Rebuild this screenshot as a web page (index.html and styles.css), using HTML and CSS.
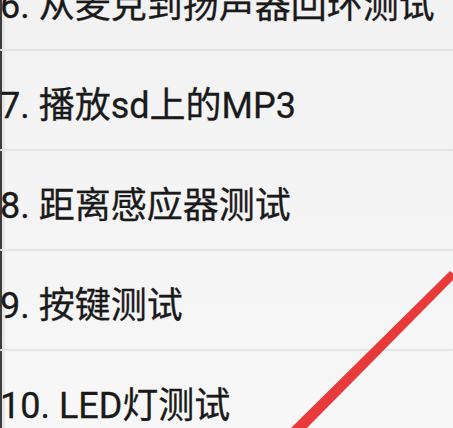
FILE: index.html
```html
<!DOCTYPE html>
<html lang="zh">
<head>
<meta charset="utf-8">
<link rel="stylesheet" href="styles.css">
</head>
<body>
<div class="screen">
  <ul class="list">
    <li class="item">6. 从麦克到扬声器回环测试</li>
    <li class="item">7. 播放sd上的MP3</li>
    <li class="item">8. 距离感应器测试</li>
    <li class="item">9. 按键测试</li>
    <li class="item">10. LED灯测试</li>
  </ul>
  <svg class="mark" width="453" height="428" viewBox="0 0 453 428">
    <polygon points="450,271 457,276 302,433 291,428" fill="#e83a3a"/>
  </svg>
</div>
</body>
</html>
```
FILE: styles.css
```css
html, body {
  margin: 0;
  padding: 0;
}
body {
  width: 453px;
  height: 428px;
  overflow: hidden;
  background: #f4f4f4;
}
.screen {
  position: relative;
  width: 453px;
  height: 428px;
  overflow: hidden;
  background: linear-gradient(#f2f2f2, #f7f7f7);
  box-shadow: inset 2px 0 0 #3c3c3c, inset 5px 0 0 #e6e6e6;
}
.list {
  list-style: none;
  margin: -49px 0 0 0;
  padding: 0;
}
.item {
  box-sizing: border-box;
  height: 100px;
  display: flex;
  align-items: center;
  padding: 4px 0 0 0;
  border-bottom: 2px solid #e3e3e3;
  font-family: Roboto, "Noto Sans CJK SC", sans-serif;
  font-size: 36px;
  color: #1a1a1a;
  -webkit-text-stroke: 0.3px #1a1a1a;
  white-space: nowrap;
}
.mark {
  position: absolute;
  left: 0;
  top: 0;
}
```
